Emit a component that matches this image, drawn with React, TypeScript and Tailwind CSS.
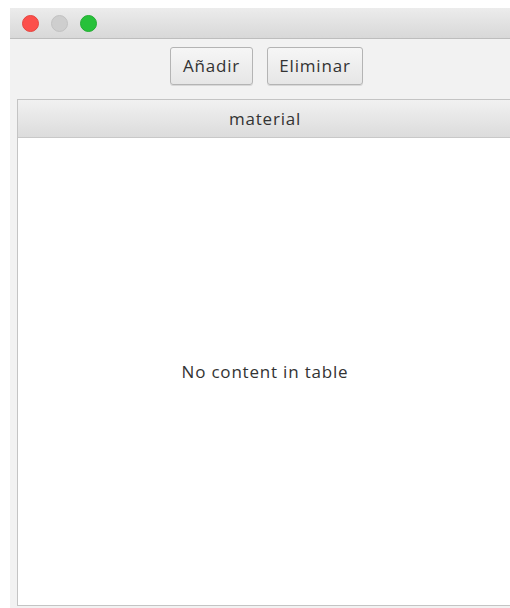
export default function App() {
  return (
    <div className="w-[510px] h-[608px] bg-white overflow-hidden pt-[8px] pl-[10px]" style={{ fontFamily: '"Open Sans", Arial, sans-serif' }}>
      <div className="w-[510px] h-[600px] flex flex-col bg-[#f2f2f2]">
        {/* title bar */}
        <div className="h-[31px] shrink-0 flex items-center gap-[12px] pl-[12px] bg-gradient-to-b from-[#ececec] to-[#d8d8d8] border-b border-[#bdbdbd]">
          <span className="w-[17px] h-[17px] rounded-full bg-[#fc4f4b] border border-[#e5453f]" />
          <span className="w-[17px] h-[17px] rounded-full bg-[#cecece] border border-[#c2c2c2]" />
          <span className="w-[17px] h-[17px] rounded-full bg-[#27c13a] border border-[#22ad32]" />
        </div>
        {/* toolbar */}
        <div className="h-[60px] shrink-0 flex items-start justify-start pl-[160px] pt-[8px] gap-[14px]">
          <button className="h-[38px] w-[83px] rounded-[3px] border border-[#b4b4b4] bg-gradient-to-b from-[#f6f6f6] to-[#e6e6e6] text-[17px] tracking-[0.8px] text-[#333] shadow-[0_1px_0_#d8d8d8]">Añadir</button>
          <button className="h-[38px] w-[96px] rounded-[3px] border border-[#b4b4b4] bg-gradient-to-b from-[#f6f6f6] to-[#e6e6e6] text-[17px] tracking-[0.8px] text-[#333] shadow-[0_1px_0_#d8d8d8]">Eliminar</button>
        </div>
        {/* table */}
        <div className="ml-[7px] w-[496px] h-[507px] flex flex-col border border-[#c4c4c4] bg-white">
          <div className="h-[38px] shrink-0 flex items-center justify-center bg-gradient-to-b from-[#f1f1f1] to-[#dcdcdc] border-b border-[#c8c8c8] text-[17px] tracking-[0.8px] text-[#333]">
            material
          </div>
          <div className="flex-1 flex items-center justify-center text-[17px] tracking-[0.8px] text-[#333]">
            No content in table
          </div>
        </div>
      </div>
    </div>
  );
}
